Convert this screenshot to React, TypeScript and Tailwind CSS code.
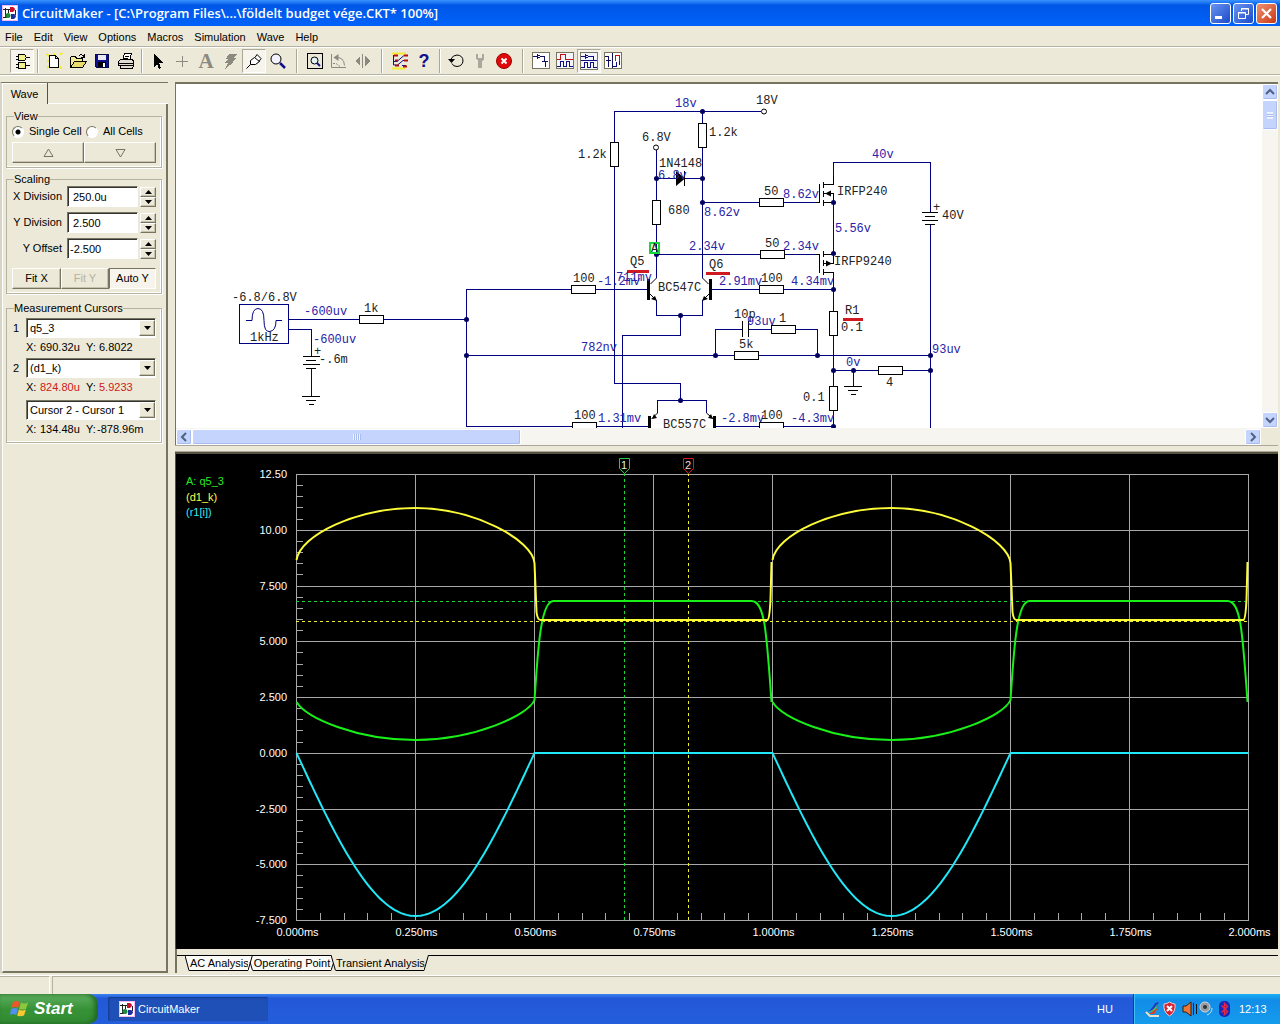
import React, { useState } from 'react';

const menus = ['File', 'Edit', 'View', 'Options', 'Macros', 'Simulation', 'Wave', 'Help'];

type ChildrenProps = {
  children: React.ReactNode;
}

function Icon({ children }: ChildrenProps) {
  return (
    <svg width="20" height="20" viewBox="0 0 20 20" fill="none" stroke="#000" className="shrink-0" shapeRendering="crispEdges">
      {children}
    </svg>
  );
}

function AppIcon() {
  return (
    <svg width="16" height="16" viewBox="0 0 16 16" fill="none" className="shrink-0">
      <rect width="16" height="16" fill="#f7b8ee" />
      <rect x="1" y="1" width="14" height="14" fill="#fff" />
      <path d="M1 4.500h8M3.500 3v9M1 12.500h4" stroke="#222" />
      <path d="M8 2h3q4 2 0 5H8z" fill="#c8102e" />
      <path d="M9 9h3q4 2 0 5H9z" fill="#1a2f9c" />
      <circle cx="6" cy="10.500" r="2.500" fill="#1c8a3c" />
      <path d="M13.500 5v5M6.500 5v3" stroke="#222" />
    </svg>
  );
}

function ToolButton({ label, pressed, children }: { label: string; pressed?: boolean; children: React.ReactNode }) {
  return (
    <button
      type="button"
      aria-label={label}
      className={`flex h-6 w-6 items-center justify-center ${pressed ? 'border border-t-[#aca899] border-l-[#aca899] border-r-white border-b-white bg-[#f6f4ec]' : ''}`}
    >
      <Icon>{children}</Icon>
    </button>
  );
}

function Separator({ wide }: { wide?: boolean }) {
  return (
    <div className={`flex justify-center ${wide ? 'w-[13px]' : 'w-2'}`}>
      <div className="h-6 w-[2px] border-l border-r border-l-[#aca899] border-r-white" />
    </div>
  );
}

function TitleBar() {
  return (
    <header className="flex h-[26px] items-center gap-1 bg-linear-to-b from-[#3a93ff] from-0% via-[#0057e6] via-20% to-[#0062fb] pr-[3px] pl-[2px]">
      <AppIcon />
      <h1 className="flex-1 truncate font-['Open_Sans','Noto_Sans',sans-serif] text-[13px] leading-5 font-semibold text-white">
        CircuitMaker - [C:\Program Files\...\földelt budget vége.CKT* 100%]
      </h1>
      <div className="flex gap-[2px]">
        <button type="button" aria-label="Minimize" className="h-[21px] w-[21px] rounded-[3px] border border-white bg-linear-to-br from-[#6a94f0] to-[#1c48c8]">
          <svg width="19" height="19" viewBox="0 0 19 19"><rect x="4" y="12" width="7" height="3" fill="#fff" /></svg>
        </button>
        <button type="button" aria-label="Restore" className="h-[21px] w-[21px] rounded-[3px] border border-white bg-linear-to-br from-[#6a94f0] to-[#1c48c8]">
          <svg width="19" height="19" viewBox="0 0 19 19" fill="none" stroke="#fff">
            <path d="M7.500 7V4.500h7v6H12M7 5h8M4.500 8.500h7v6h-7zM4 9h8" />
          </svg>
        </button>
        <button type="button" aria-label="Close" className="h-[21px] w-[21px] rounded-[3px] border border-white bg-linear-to-br from-[#f09070] to-[#c83408]">
          <svg width="19" height="19" viewBox="0 0 19 19" stroke="#fff" strokeWidth="2.200"><path d="M5 5l9 9M14 5l-9 9" /></svg>
        </button>
      </div>
    </header>
  );
}

function ToolBar() {
  return (
    <div className="flex h-[29px] items-center border-t border-b border-[#b5b2a0] pl-[10px] shadow-[0_1px_0_#fff,inset_0_1px_0_#fff]">
      <ToolButton label="Digital mode" pressed>
        <path d="M6.500 3.500h6l2 3-2 3h-6zM6.500 11.500h7v6h-7z" fill="#f4f08c" />
        <path d="M4 5.500h2M4 8.500h2M15 6.500h3M4 13.500h2M4 16.500h2M14 14.500h4" />
      </ToolButton>
      <Separator />
      <ToolButton label="New">
        <path d="M3 3l3 3M10 2v2M3 10h2M3 17l3-2M16 16l2 2M16 4l2-2" stroke="#f4ec30" strokeWidth="2" />
        <path d="M5.500 4.500h6l3 3v9h-9zM11.500 4.500v3h3" fill="#fff" />
      </ToolButton>
      <ToolButton label="Open">
        <path d="M2.500 16.500v-10l1-1h4l1 2h6v3" fill="#f4ec90" />
        <path d="M2.500 16.500l4-6h12l-4 6z" fill="#e8dc6c" />
        <path d="M11 4.500q3-2 5 1M16 3v3h-3" />
      </ToolButton>
      <ToolButton label="Save">
        <path d="M3.500 3.500h13v13h-12l-1-1z" fill="#10108c" stroke="#08084c" />
        <path d="M6 4h8v5H6z" fill="#e8e8f4" stroke="none" />
        <path d="M6 11h8v5H6z" fill="#000" stroke="none" />
        <path d="M11 12h2v4h-2z" fill="#fff" stroke="none" />
      </ToolButton>
      <ToolButton label="Print">
        <path d="M6.500 9.500l2-7h7l-2 7M9 5h4M8 7h4" fill="#fff" />
        <path d="M2.500 10.500l2-2h12l1 2v4h-15zM4.500 14.500v3h12l1-3M3 12.500h14" fill="#e0ddd0" />
      </ToolButton>
      <Separator />
      <ToolButton label="Arrow">
        <path d="M6 3v13l3-3 2 5 2-1-2-5h4z" fill="#000" stroke="none" />
      </ToolButton>
      <ToolButton label="Wire">
        <path d="M4 10.500h12M10.500 5v11" stroke="#8c8a80" />
      </ToolButton>
      <button type="button" aria-label="Text" className="flex h-6 w-6 items-center justify-center font-['Liberation_Serif',serif] text-[21px] leading-6 font-bold text-[#8c8a80]">A</button>
      <ToolButton label="Delete">
        <path d="M9 3h8l-4 4h3l-4 4h2l-9 7 3-6H5l3-4H6z" fill="#8c8a80" stroke="none" />
      </ToolButton>
      <ToolButton label="Probe" pressed>
        <g shapeRendering="auto">
          <path d="M2.500 17.500l4-4" />
          <path d="M6.500 13.500V9.500l4-3 5 4-4 3zM11 6.500l2-3 4 4-2 3" fill="#fff" />
        </g>
      </ToolButton>
      <ToolButton label="Zoom">
        <g shapeRendering="auto">
          <path d="M12 12l5 5" stroke="#10108c" strokeWidth="2.500" />
          <circle cx="8" cy="8" r="5" fill="#f2f2ff" />
        </g>
      </ToolButton>
      <Separator wide />
      <ToolButton label="Fit to window">
        <rect x="2.500" y="2.500" width="15" height="15" rx="1" />
        <g shapeRendering="auto">
          <path d="M12 12l3 3" stroke="#10108c" strokeWidth="2" />
          <circle cx="9.500" cy="9.500" r="3.500" fill="#e0f4f4" />
        </g>
      </ToolButton>
      <ToolButton label="Rotate">
        <g stroke="#8c8a80" shapeRendering="auto">
          <path d="M2.500 3v13.500H17" />
          <path d="M6 6.500q9-1 9.500 8" />
          <path d="M9.500 3v7l-5-3.500z" fill="#8c8a80" stroke="none" />
          <path d="M4 12.500h3l4 3" strokeDasharray="2 1" />
        </g>
      </ToolButton>
      <ToolButton label="Mirror">
        <path d="M9.500 3v14" stroke="#8c8a80" />
        <path d="M7 5v10l-5-5zM12 5v10l5-5z" fill="#8c8a80" stroke="none" />
      </ToolButton>
      <Separator wide />
      <ToolButton label="Run digital">
        <g shapeRendering="auto">
          <path d="M2 2.500h14M2 17.500h13" stroke="#f4ec30" strokeWidth="2" />
          <path d="M3.500 4v10h3M3 10.500h4l7-6h3M7 14.500l6-5h4M12 14.500h4" stroke="#10108c" />
          <path d="M4 4.500h4M14 4.500h4M5 14.500h4M13 15.500h4M5 9.500h3M14 9.500h4" stroke="#b01010" strokeWidth="2" />
        </g>
      </ToolButton>
      <button type="button" aria-label="Help" className="flex h-6 w-6 items-center justify-center font-['Liberation_Sans',sans-serif] text-[18px] leading-6 font-bold text-[#10108c]">?</button>
      <Separator />
      <ToolButton label="Reset">
        <g shapeRendering="auto">
          <path d="M5 8q2-4 6-4 6 .5 6 6-.5 5-6 5.500-4 0-5-3" />
          <path d="M2 8h7l-3.500 4z" fill="#000" stroke="none" />
        </g>
      </ToolButton>
      <ToolButton label="Options">
        <path d="M6 3v5l2 2v7h4v-7l2-2V3h-2v4H8V3z" fill="#aaa89c" stroke="none" />
      </ToolButton>
      <ToolButton label="Stop">
        <g shapeRendering="auto">
          <circle cx="10" cy="10" r="7.500" fill="#e00808" stroke="#a00000" />
          <path d="M7.500 7.500l5 5M12.500 7.500l-5 5" stroke="#fff" strokeWidth="2" />
        </g>
      </ToolButton>
      <Separator wide />
      <ToolButton label="Schematic only">
        <rect x="1.500" y="1.500" width="17" height="16" fill="#fff" stroke="#77755f" />
        <path d="M2 5.500h4M10 5.500h3v5M6.500 3.500l3 2-3 2zM11 10.500h6M14.500 11v5" stroke="#101060" />
      </ToolButton>
      <ToolButton label="Waveforms only">
        <rect x="1.500" y="1.500" width="17" height="16" fill="#f4f4fc" stroke="#77755f" />
        <path d="M2 8.500h3v-5h5v5h8" stroke="#c01010" />
        <path d="M2 15.500h3v-5h3v5h3v-5h3v5h4" stroke="#101080" />
      </ToolButton>
      <ToolButton label="Split horizontally" pressed>
        <rect x="1.500" y="1.500" width="17" height="17" fill="#f4f4fc" stroke="#77755f" />
        <path d="M2 5.500h4M10 5.500h4v3M6.500 3.500l3 2-3 2zM2 9.500h16M2 16.500h3v-5h3v5h3v-5h3v5h4" stroke="#101080" />
      </ToolButton>
      <ToolButton label="Split vertically">
        <rect x="1.500" y="1.500" width="17" height="16" fill="#fff" stroke="#77755f" />
        <path d="M2 5.500h3v4M3 9.500h5M5.500 10v6M9.500 2v15" stroke="#101060" />
        <path d="M12.500 10v-6h4v6" stroke="#c01010" />
        <path d="M10 15.500h3v-5M16.500 10v4" stroke="#101080" />
      </ToolButton>
    </div>
  );
}

const raised = 'border border-t-white border-l-white border-r-[#77755f] border-b-[#77755f] shadow-[inset_-1px_-1px_0_#c5c2b0]';
const sunken = 'border border-t-[#77755f] border-l-[#77755f] border-r-white border-b-white';

function Group({ title, children }: { title: string; children: React.ReactNode }) {
  return (
    <fieldset className="min-w-0 border border-[#b5b2a0] px-[5px] pb-[4px] shadow-[inset_-1px_-1px_0_#fff,1px_1px_0_#fff]">
      <legend className="ml-[2px] h-[14px] leading-[14px]">{title}</legend>
      {children}
    </fieldset>
  );
}

function NumberField({ id, label, initial }: { id: string; label: string; initial: string }) {
  const [value, setValue] = useState<string>(initial);

  return (
    <div className="flex h-[21px] items-center">
      <label htmlFor={id} className="mr-[5px] w-[50px] text-right whitespace-nowrap">{label}</label>
      <input
        id={id}
        type="text"
        value={value}
        onChange={(e) => setValue(e.target.value)}
        className={`h-[21px] w-[71px] bg-white outline-none ${value.startsWith('-') ? 'pl-[2px]' : 'pl-[5px]'} ${sunken} shadow-[inset_1px_1px_0_#333]`}
      />
      <div className="ml-[2px] flex flex-col">
        <button type="button" aria-label={`${label} up`} className={`flex h-[10px] w-4 items-center justify-center ${raised}`}>
          <svg width="7" height="4" viewBox="0 0 7 4"><path d="M3.500 0L7 4H0z" /></svg>
        </button>
        <button type="button" aria-label={`${label} down`} className={`flex h-[10px] w-4 items-center justify-center ${raised}`}>
          <svg width="7" height="4" viewBox="0 0 7 4"><path d="M3.500 4L7 0H0z" /></svg>
        </button>
      </div>
    </div>
  );
}

function CursorSelect({ id, label, options }: { id: string; label: string; options: string[] }) {
  return (
    <div className="flex h-5 items-center">
      <label htmlFor={id} className="w-[14px] pl-[1px]">{label}</label>
      <div className="relative flex-1">
        <select
          id={id}
          aria-label={label ? undefined : 'Cursor difference'}
          className={`h-5 w-full appearance-none bg-white pl-[3px] outline-none ${sunken} shadow-[inset_1px_1px_0_#333]`}
        >
          {options.map((option) => <option key={option}>{option}</option>)}
        </select>
        <span className={`pointer-events-none absolute top-[2px] right-[1px] flex h-4 w-4 items-center justify-center bg-[#ece9d8] ${raised}`}>
          <svg width="7" height="4" viewBox="0 0 7 4"><path d="M3.500 4L7 0H0z" /></svg>
        </span>
      </div>
    </div>
  );
}

function Reading({ x, y, red }: { x: string; y: string; red?: boolean }) {
  return (
    <p className="flex h-[18px] items-center pl-[14px] whitespace-pre">
      <span className="w-[14px]">X:</span>
      <span className={`w-[46px] ${red ? 'text-[#d01818]' : ''}`}>{x}</span>
      <span className="w-[11px]">Y:</span>
      <span className={red ? 'pl-[2px] text-[#d01818]' : y.startsWith('-') ? '' : 'pl-[2px]'}>{y}</span>
    </p>
  );
}

function WavePanel() {
  return (
    <aside className="flex w-[168px] shrink-0 flex-col border-t border-l-2 border-t-[#77755f] border-l-[#d8d4c4] text-[11px]">
      <div className="flex h-[21px]">
        <button type="button" className="w-[46px] border-r border-[#55533f] leading-5 shadow-[inset_1px_1px_0_#fff]">Wave</button>
        <div className="flex-1 border-b border-white" />
      </div>
      <div className="flex flex-1 flex-col border-r-2 border-b-2 border-[#77755f] border-l border-l-white pt-[5px] pr-[4px] pl-[3px]">
        <Group title="View">
          <div className="flex h-[15px] items-center pt-[2px]">
            <label className="flex w-[74px] items-center gap-[5px] whitespace-nowrap">
              <input type="radio" name="cells" defaultChecked className="m-0 h-3 w-3 appearance-none rounded-full border border-[#77755f] border-r-white border-b-white bg-white checked:bg-[radial-gradient(#000_0_2px,#fff_3px)]" />
              Single Cell
            </label>
            <label className="flex items-center gap-[5px] whitespace-nowrap">
              <input type="radio" name="cells" className="m-0 h-3 w-3 appearance-none rounded-full border border-[#77755f] border-r-white border-b-white bg-white checked:bg-[radial-gradient(#000_0_2px,#fff_3px)]" />
              All Cells
            </label>
          </div>
          <div className="mt-[4px] flex">
            <button type="button" aria-label="Previous cell" className={`flex h-[21px] flex-1 items-center justify-center ${raised}`}>
              <svg width="11" height="10" viewBox="0 0 11 10" fill="none" stroke="#77755f"><path d="M5.500 1L10 8.500H1z" /></svg>
            </button>
            <button type="button" aria-label="Next cell" className={`flex h-[21px] flex-1 items-center justify-center ${raised}`}>
              <svg width="11" height="10" viewBox="0 0 11 10" fill="none" stroke="#77755f"><path d="M5.500 9L10 1.500H1z" /></svg>
            </button>
          </div>
        </Group>
        <div className="h-[4px]" />
        <Group title="Scaling">
          <div className="flex flex-col gap-[5px]">
            <NumberField id="xdiv" label="X Division" initial="250.0u" />
            <NumberField id="ydiv" label="Y Division" initial="2.500" />
            <NumberField id="yoff" label="Y Offset" initial="-2.500" />
          </div>
          <div className="mt-[9px] flex">
            <button type="button" className={`h-[21px] w-[49px] ${raised}`}>Fit X</button>
            <button type="button" disabled className={`h-[21px] w-[48px] text-[#b5b2a0] ${raised}`}>Fit Y</button>
            <button type="button" className={`h-[21px] flex-1 bg-[#f6f4ec] ${sunken}`}>Auto Y</button>
          </div>
        </Group>
        <div className="h-[7px]" />
        <Group title="Measurement Cursors">
          <div className="pt-[3px]">
            <CursorSelect id="cursor1" label="1" options={['q5_3', '(d1_k)', '(r1[i])']} />
            <Reading x="690.32u" y="6.8022" />
          </div>
          <div className="pt-[2px]">
            <CursorSelect id="cursor2" label="2" options={['(d1_k)', 'q5_3', '(r1[i])']} />
            <Reading x="824.80u" y="5.9233" red />
          </div>
          <div className="pt-[4px]">
            <CursorSelect id="diff" label="" options={['Cursor 2 - Cursor 1', 'Cursor 1 - Cursor 2']} />
            <Reading x="134.48u" y="-878.96m" />
          </div>
        </Group>
      </div>
    </aside>
  );
}

// horizontal and vertical wires, grid coordinates of the sheet
const wires = [
  'M614.500 142V111.500H761', 'M614.500 167V383.500H680.500V400.500', 'M702.500 111V123', 'M702.500 148V278',
  'M656.500 150V200', 'M656.500 225V278', 'M656 178.500H702', 'M702 202.500H759', 'M784 202.500H819',
  'M656 254.500H760', 'M785 254.500H819', 'M833.500 184V162.500H930.500V212', 'M833.500 202V254', 'M833.500 273V311',
  'M833.500 336V386', 'M833.500 411V426', 'M466 289.500H571', 'M596 289.500H647', 'M712 289.500H759', 'M784 289.500H833',
  'M656.500 300V315.500H702.500V300', 'M680.500 315V335.500H622.500V428', 'M466.500 289V426.500H572', 'M466 355.500H734',
  'M759 355.500H930', 'M715.500 355V329.500H742', 'M748 329.500H771', 'M796 329.500H817.500V355', 'M833 370.500H878',
  'M903 370.500H930', 'M853.500 370V386', 'M930.500 225V428', 'M597 426.500H648', 'M716 426.500H759', 'M784 426.500H833',
  'M657.500 413V400.500H706.500V413', 'M289 319.500H359', 'M384 319.500H466', 'M289 329.500H311.500V356', 'M311.500 369V396',
];

const resistors = [
  [610.5, 142.5, 8, 24], [698.5, 123.5, 8, 24], [652.5, 200.5, 8, 24], [759.5, 198.5, 24, 8], [760.5, 250.5, 24, 8],
  [571.5, 285.5, 24, 8], [759.5, 285.5, 24, 8], [829.5, 311.5, 8, 24], [829.5, 386.5, 8, 24], [734.5, 351.5, 24, 8],
  [771.5, 325.5, 24, 8], [878.5, 366.5, 24, 8], [572.5, 422.5, 24, 8], [759.5, 422.5, 24, 8], [359.5, 315.5, 24, 8],
];

const junctions = [
  [702.5, 111.5], [656.5, 178.5], [702.5, 178.5], [702.5, 202.5], [656.5, 254.5], [833.5, 202.5], [833.5, 253.5],
  [833.5, 289.5], [680.5, 315.5], [466.5, 319.5], [466.5, 355.5], [715.5, 355.5], [817.5, 355.5], [930.5, 355.5],
  [833.5, 370.5], [853.5, 370.5], [930.5, 370.5], [680.5, 400.5], [833.5, 426.5],
];

const partLabels: [number, number, string][] = [
  [232, 301, '-6.8/6.8V'], [250, 341, '1kHz'], [364, 312, '1k'], [319, 363, '-.6m'], [578, 158, '1.2k'],
  [709, 136, '1.2k'], [642, 141, '6.8V'], [756, 104, '18V'], [659, 167, '1N4148'], [668, 214, '680'], [630, 265, 'Q5'],
  [709, 268, 'Q6'], [573, 282, '100'], [658, 291, 'BC547C'], [764, 195, '50'], [765, 247, '50'], [837, 195, 'IRFP240'],
  [834, 265, 'IRFP9240'], [942, 219, '40V'], [761, 282, '100'], [734, 318, '10p'], [779, 322, '1'], [739, 348, '5k'],
  [845, 314, 'R1'], [841, 331, '0.1'], [803, 401, '0.1'], [886, 386, '4'], [574, 419, '100'], [663, 428, 'BC557C'],
  [761, 419, '100'], [933, 211, '+'], [314, 355, '+'], [651, 252, 'A'],
];

const netLabels: [number, number, string][] = [
  [304, 315, '-600uv'], [313, 343, '-600uv'], [675, 107, '18v'], [658, 179, '6.8v'], [704, 216, '8.62v'],
  [783, 198, '8.62v'], [689, 250, '2.34v'], [783, 250, '2.34v'], [835, 232, '5.56v'], [872, 158, '40v'],
  [597, 285, '-1.2mv'], [616, 281, '711mv'], [719, 285, '2.91mv'], [791, 285, '4.34mv'], [747, 325, '93uv'],
  [581, 351, '782nv'], [846, 366, '0v'], [932, 353, '93uv'], [598, 422, '1.31mv'], [721, 422, '-2.8mv'], [791, 422, '-4.3mv'],
];

function Schematic() {
  return (
    <svg width="1086" height="344" viewBox="176 84 1086 344" className="shrink-0 font-['Liberation_Mono',monospace] text-[12px]">
      <g fill="none" shapeRendering="crispEdges">
        <path d={wires.join('')} stroke="#000080" />
        <rect x="239.500" y="304.500" width="49" height="39" stroke="#000080" />
        <g stroke="#000">
          {resistors.map(([x, y, w, h]) => <rect key={`${x}-${y}`} x={x} y={y} width={w} height={h} fill="#fff" />)}
          {/* batteries and grounds */}
          <path d="M303 356.500h17M306 360.500h10M303 364.500h17M306 368.500h10M302 396.500h18M306 400.500h10M309 404.500h5" />
          <path d="M922 212.500h16M925 216.500h10M922 220.500h16M925 224.500h10M844 386.500h18M848 390.500h10M851 394.500h5" />
          {/* capacitor */}
          <path d="M742.500 321v16M748.500 321v16" />
          {/* mosfets */}
          <path d="M816 202.500h3.500V184M823.500 182v6M823.500 191v6M823.500 200v6M823 184.500h10.500V176M823 193.500h10.500V202.500H823" />
          <path d="M816 254.500h3.500V273M823.500 251v6M823.500 260v6M823.500 269v6M823 254.500h10.500V263.500H823M823 272.500h10.500V280" />
        </g>
      </g>
      <g fill="none" stroke="#000">
        <path d="M656.500 278l-6 6M650 294l6 6M702.500 278l6 6M709 294l-6 6M657.500 413l-6 6M706.500 413l7 6" />
        <path d="M648.500 279v21M710.500 279v21M649.500 416v12M714.500 416v12" strokeWidth="3" />
        <path d="M684.500 171v15" />
        <circle cx="656" cy="147.500" r="2.500" fill="#fff" />
        <circle cx="764" cy="111.500" r="2.500" fill="#fff" />
      </g>
      <path d="M676 171v15l9-7.500zM657 301l-2-5-4 3zM702 301l2-5 4 3zM652 419l5-1-3-4zM713 419l-5-1 3-4zM825 193.500l6-3v6zM832 263.500l-6-3v6z" />
      <path d="M246 320.500h6q0-12 6-12t6 12 6 11 6-11h6" fill="none" stroke="#000080" />
      {junctions.map(([x, y]) => <circle key={`${x}-${y}`} cx={x} cy={y} r="2.500" fill="#000060" />)}
      <rect x="650" y="243" width="9" height="10" fill="none" stroke="#18d838" strokeWidth="2" />
      <path d="M627 271.500h22M706 273.500h24M843 319.500h20" stroke="#d01820" strokeWidth="3" />
      <g fill="#2a22a8">
        {netLabels.map(([x, y, text]) => <text key={`${x}-${y}`} x={x} y={y}>{text}</text>)}
      </g>
      <g fill="#222">
        {partLabels.map(([x, y, text]) => <text key={`${x}-${y}`} x={x} y={y}>{text}</text>)}
      </g>
    </svg>
  );
}

function ScrollButton({ label, d }: { label: string; d: string }) {
  return (
    <button type="button" aria-label={label} className="flex h-4 w-4 shrink-0 items-center justify-center rounded-[2px] border border-white bg-[#c4d4fc] shadow-[inset_-1px_-1px_0_#a8bcf0]">
      <svg width="10" height="10" viewBox="0 0 10 10" fill="none" stroke="#4d6185" strokeWidth="2"><path d={d} /></svg>
    </button>
  );
}

const X0 = 296.5;
const Y0 = 753;
const PERIOD = 476;
const yLabels = ['12.50', '10.00', '7.500', '5.000', '2.500', '0.000', '-2.500', '-5.000', '-7.500'];
const xLabels = ['0.000ms', '0.250ms', '0.500ms', '0.750ms', '1.000ms', '1.250ms', '1.500ms', '1.750ms', '2.000ms'];

// current through R1: negative half waves only
const currentPath = () => {
  const points: string[] = [];
  for (let i = 0; i <= 952; i += 2) {
    const s = Math.sin((2 * Math.PI * i) / PERIOD);
    points.push(`${X0 + i},${Y0 + Math.max(0, s) * 163}`);
  }
  return points.join(' ');
};

const diodeWave = (x: number) =>
  `M${x} 560C${x + 4} 535 ${x + 60} 508 ${x + 119} 508S${x + 236} 540 ${x + 238} 563L${x + 240} 612Q${x + 241} 620 ${x + 244} 620H${x + 471}Q${x + 473} 619 ${x + 474} 600L${x + 475} 562`;

const collectorWave = (x: number) =>
  `M${x} 702C${x + 10} 718 ${x + 60} 740 ${x + 119} 740S${x + 232} 715 ${x + 238} 700C${x + 241} 660 ${x + 243} 601 ${x + 257} 601H${x + 455}C${x + 468} 601 ${x + 470} 630 ${x + 475} 702`;

function Plot() {
  const rows = yLabels.map((_, i) => Math.round(474 + i * 55.75) + 0.5);
  const cols = xLabels.map((_, i) => X0 + i * 119);
  const ticksX = Array.from({ length: 41 }, (_, i) => Math.round(296 + i * 23.8) + 0.5);
  const ticksY = Array.from({ length: 41 }, (_, i) => Math.round(474 + i * 11.15) + 0.5);

  return (
    <svg viewBox="176 454 1102 495" className="block h-auto w-full bg-black font-['Liberation_Sans',sans-serif] text-[11px]">
      <g stroke="#a8a8a8" shapeRendering="crispEdges">
        {rows.map((y) => <path key={y} d={`M296 ${y}H1249`} />)}
        {cols.map((x) => <path key={x} d={`M${x} 474V921`} />)}
        {ticksX.map((x) => <path key={x} d={`M${x} 913V920`} />)}
        {ticksY.map((y) => <path key={y} d={`M297 ${y}h6`} />)}
      </g>
      <g fill="#fff">
        {yLabels.map((label, i) => <text key={label} x="287" y={rows[i] + 3.5} textAnchor="end">{label}</text>)}
        {xLabels.map((label, i) => <text key={label} x={cols[i] + 1} y="936" textAnchor="middle">{label}</text>)}
      </g>
      <g fill="none" strokeDasharray="3 3" shapeRendering="crispEdges">
        <path d="M296 601.500H1248" stroke="#18d838" />
        <path d="M624.500 473V920" stroke="#18d838" />
        <path d="M296 621.500H1248" stroke="#f0f030" />
        <path d="M688.500 473V920" stroke="#f0f030" />
      </g>
      <g fill="none" strokeWidth="2">
        <path d={collectorWave(X0) + collectorWave(X0 + PERIOD)} stroke="#18f018" />
        <path d={diodeWave(X0) + diodeWave(X0 + PERIOD)} stroke="#fcfc38" />
        <polyline points={currentPath()} stroke="#20e8f8" />
      </g>
      <g fill="#000">
        <path d="M619.500 458.500h10v10l-5 5-5-5z" stroke="#28c848" />
        <path d="M683.500 458.500h10v10l-5 5-5-5z" stroke="#e01828" />
      </g>
      <text x="621" y="469" fill="#d8f8d8">1</text>
      <text x="685" y="469" fill="#f8d8d8">2</text>
      <text x="186" y="485" fill="#28e828">A: q5_3</text>
      <text x="186" y="501" fill="#fcfc50">(d1_k)</text>
      <text x="186" y="516" fill="#30e8f8">(r1[i])</text>
    </svg>
  );
}

function TabEdge({ d, fill }: { d: string; fill?: string }) {
  return (
    <svg width="5" height="16" viewBox="0 0 5 16" fill="none" stroke="#000" className="shrink-0">
      {fill && <path d={fill} fill="#fbfaf6" stroke="none" />}
      <path d={d} />
    </svg>
  );
}

function AnalysisTabs() {
  return (
    <div className="border-l-2 border-[#77755f] pt-[6px]">
      <div className="flex h-[18px] text-[11px] leading-[14px]">
        <div className="h-px w-[8px] bg-black" />
        <TabEdge d="M0 0.500L4 15.500H5M0 .5H5" fill="M0 0h5v16H4z" />
        <button type="button" className="h-4 w-[58px] border-t border-b border-black bg-[#fbfaf6] whitespace-nowrap">AC Analysis</button>
        <TabEdge d="M4.500 0L0 15.500M2 7L4.500 15.500M0 .5H5" fill="M0 0h5v16H0z" />
        <button type="button" className="h-4 w-[78px] border-t border-b border-black bg-[#fbfaf6] whitespace-nowrap">Operating Point</button>
        <TabEdge d="M0 0L4.500 15.500M2.500 8L0 15.500" fill="M0 0l2 8-2 8z" />
        <button type="button" className="h-4 w-[88px] border-b border-black pt-px whitespace-nowrap">Transient Analysis</button>
        <TabEdge d="M0 15.500L4.500 0" />
        <div className="h-px flex-1 bg-black" />
      </div>
    </div>
  );
}

function TaskBar() {
  return (
    <footer className="flex h-[30px] items-stretch bg-linear-to-b from-[#3c81f0] from-0% via-[#2258d8] via-15% to-[#245edb] text-white">
      <button type="button" className="flex w-[98px] items-center gap-[5px] rounded-r-[10px] bg-linear-to-b from-[#5eb060] via-[#379237] to-[#318a32] pl-[10px] font-['Liberation_Sans',sans-serif] text-[17px] font-bold italic shadow-[inset_-3px_0_5px_#1f6420]">
        <svg width="19" height="18" viewBox="0 0 19 18" className="shrink-0">
          <path d="M3 2q4-2 7 0L8 8Q5 6 1 8z" fill="#e8582c" />
          <path d="M11 2.500q3 2 7 0L16 9q-4 1-7 0z" fill="#8cc83c" />
          <path d="M1 9q4-2 7 0l-2 6q-3-2-6 0z" fill="#5090f0" />
          <path d="M9 9.500q3 2 7 0l-2 6q-4 1.500-7 0z" fill="#f8c830" />
        </svg>
        Start
      </button>
      <button type="button" className="my-[3px] ml-[10px] flex w-[160px] items-center gap-[3px] rounded-[2px] bg-[#1e50b8] pl-[11px] text-[11px] shadow-[inset_1px_1px_2px_#123a8c]">
        <AppIcon />
        CircuitMaker
      </button>
      <div className="flex-1" />
      <span className="w-[36px] self-center text-[11px]">HU</span>
      <div className="flex w-[147px] items-center border-l border-[#0c3c98] bg-linear-to-b from-[#18b0f4] from-0% via-[#128ce8] via-20% to-[#159cec] pl-[11px] shadow-[inset_1px_0_0_#40c0f8]">
        <svg width="86" height="18" viewBox="0 0 86 18" className="shrink-0">
          <path d="M1 12l4 4h9" fill="none" stroke="#e8e0c8" strokeWidth="2" />
          <path d="M1 12q6-2 9-9l4-1-4 7z" fill="#2038c0" />
          <path d="M3 13q6-3 9-9l-1 6z" fill="#50c040" />
          <path d="M4 14l10-7-5 7z" fill="#e04020" />
          <path d="M19 4q3 0 5.500-2Q27 4 30 4q1 8-5.500 12Q18 12 19 4z" fill="#d82030" stroke="#f4d0d0" />
          <path d="M22 6l5 5M27 6l-5 5" stroke="#fff" strokeWidth="2" />
          <path d="M38 6h3l5-4v14l-5-4h-3z" fill="#e87838" stroke="#401808" />
          <path d="M48.500 3v12M51.500 4v10" stroke="#201818" />
          <circle cx="60" cy="7" r="5" fill="#989ca0" stroke="#d0d4d8" />
          <circle cx="60" cy="7" r="2" fill="#303438" />
          <path d="M62 15q5-2 5-7" fill="none" stroke="#d8dce0" />
          <rect x="74" y="1" width="11" height="16" rx="5" fill="#1828b8" />
          <path d="M76.500 5.500l6 6-3 3v-11l3 3-6 6" fill="none" stroke="#e02848" strokeWidth="1.500" />
        </svg>
        <time className="ml-[8px] text-[11px]">12:13</time>
      </div>
    </footer>
  );
}

export default function App() {
  return (
    <div className="flex min-h-screen flex-col overflow-hidden bg-[#ece9d8] font-['Liberation_Sans',sans-serif] text-[11px] text-black">
      <TitleBar />
      <nav className="flex h-5 items-center gap-[11px] pt-px pl-[5px]">
        {menus.map((menu) => <button key={menu} type="button" className="leading-5">{menu}</button>)}
      </nav>
      <ToolBar />
      <main className="mt-[7px] flex flex-1">
        <WavePanel />
        <div className="ml-[7px] flex min-w-0 flex-1 flex-col pr-[2px]">
          <section className="flex flex-col border-t-2 border-l border-[#77755f]">
            <div className="flex">
              <div className="flex min-w-0 flex-1 overflow-hidden bg-white">
                <Schematic />
              </div>
              <div className="flex w-4 shrink-0 flex-col bg-[#f6f5ef]">
                <ScrollButton label="Scroll up" d="M1 7l4-4 4 4" />
                <div className="flex h-[30px] items-center justify-center rounded-[2px] border border-white bg-[#c4d4fc] shadow-[inset_-1px_-1px_0_#a8bcf0]">
                  <div className="h-[7px] w-[6px] border-t border-b border-[#eef4fe] bg-[repeating-linear-gradient(#eef4fe_0_1px,#a8bcf0_1px_2px)]" />
                </div>
                <div className="flex-1" />
                <ScrollButton label="Scroll down" d="M1 3l4 4 4-4" />
              </div>
            </div>
            <div className="flex h-[17px] items-center bg-[#f6f5ef]">
              <ScrollButton label="Scroll left" d="M7 1L3 5l4 4" />
              <div className="flex h-4 w-[329px] items-center justify-center rounded-[2px] border border-white bg-[#c4d4fc] shadow-[inset_-1px_-1px_0_#a8bcf0]">
                <div className="h-[6px] w-[8px] bg-[repeating-linear-gradient(90deg,#eef4fe_0_1px,#a8bcf0_1px_2px)]" />
              </div>
              <div className="flex-1" />
              <ScrollButton label="Scroll right" d="M3 1l4 4-4 4" />
              <div className="w-[17px] self-stretch bg-[#ece9d8]" />
            </div>
          </section>
          <div className="h-[7px] border-t border-b border-t-[#aca899] border-b-[#aca899]" />
          <section className="border-t-2 border-l border-[#55533f]">
            <Plot />
          </section>
          <AnalysisTabs />
        </div>
      </main>
      <div className="mt-[2px] flex h-[19px] gap-[2px] border-t border-white">
        <div className="w-[50px] border-t border-r border-t-[#b5b2a0] border-r-white" />
        <div className="flex-1 border-t border-l border-[#b5b2a0]" />
      </div>
      <TaskBar />
    </div>
  );
}
